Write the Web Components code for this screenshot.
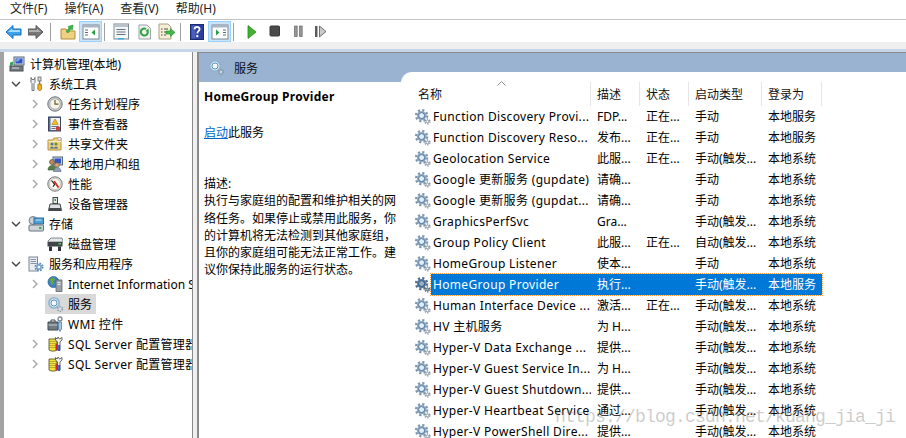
<!DOCTYPE html>
<html lang="zh">
<head>
<meta charset="utf-8">
<title>计算机管理</title>
<style>
  html, body { margin: 0; height: 438px; overflow: hidden; background: #fff; }
  body { font: 12px "Noto Sans", "Noto Sans CJK SC", sans-serif; color: #000; position: relative; }
  mmc-shell { height: 438px; }
</style>
</head>
<body>
<mmc-shell>
  <mmc-menu slot="menu">
    <span>文件(F)</span><span>操作(A)</span><span>查看(V)</span><span>帮助(H)</span>
  </mmc-menu>
  <mmc-toolbar slot="toolbar"></mmc-toolbar>
  <tree-panel slot="tree">
    <tree-item level="0" icon="computer">计算机管理(本地)</tree-item>
    <tree-item level="1" icon="tools" state="open">系统工具</tree-item>
    <tree-item level="2" icon="clock" state="closed">任务计划程序</tree-item>
    <tree-item level="2" icon="event" state="closed">事件查看器</tree-item>
    <tree-item level="2" icon="share" state="closed">共享文件夹</tree-item>
    <tree-item level="2" icon="users" state="closed">本地用户和组</tree-item>
    <tree-item level="2" icon="perf" state="closed">性能</tree-item>
    <tree-item level="2" icon="device">设备管理器</tree-item>
    <tree-item level="1" icon="storage" state="open">存储</tree-item>
    <tree-item level="2" icon="disk">磁盘管理</tree-item>
    <tree-item level="1" icon="server" state="open">服务和应用程序</tree-item>
    <tree-item level="2" icon="iis" state="closed">Internet Information Services (IIS) 管理器</tree-item>
    <tree-item level="2" icon="lightGear" selected>服务</tree-item>
    <tree-item level="2" icon="wmi" style="--ls:.4px">WMI 控件</tree-item>
    <tree-item level="2" icon="sql" state="closed" style="--ls:.3px">SQL Server 配置管理器</tree-item>
    <tree-item level="2" icon="sql" state="closed" style="--ls:.3px">SQL Server 配置管理器</tree-item>
  </tree-panel>
  <services-panel slot="main">
    <service-info slot="info" name="HomeGroup Provider">
      执行与家庭组的配置和维护相关的网络任务。如果停止或禁用此服务，你的计算机将无法检测到其他家庭组，且你的家庭组可能无法正常工作。建议你保持此服务的运行状态。
    </service-info>
    <service-head slot="list"></service-head>
    <service-row slot="list" desc="FDP..." status="正在..." start="手动" logon="本地服务">Function Discovery Provi...</service-row>
    <service-row slot="list" desc="发布..." status="正在..." start="手动" logon="本地服务">Function Discovery Reso...</service-row>
    <service-row slot="list" desc="此服..." status="正在..." start="手动(触发..." logon="本地系统">Geolocation Service</service-row>
    <service-row slot="list" desc="请确..." start="手动" logon="本地系统">Google 更新服务 (gupdate)</service-row>
    <service-row slot="list" desc="请确..." start="手动" logon="本地系统">Google 更新服务 (gupdat...</service-row>
    <service-row slot="list" desc="Gra..." start="手动(触发..." logon="本地系统">GraphicsPerfSvc</service-row>
    <service-row slot="list" desc="此服..." status="正在..." start="自动(触发..." logon="本地系统">Group Policy Client</service-row>
    <service-row slot="list" desc="使本..." start="手动" logon="本地系统">HomeGroup Listener</service-row>
    <service-row slot="list" desc="执行..." start="手动(触发..." logon="本地服务" selected>HomeGroup Provider</service-row>
    <service-row slot="list" desc="激活..." status="正在..." start="手动(触发..." logon="本地系统">Human Interface Device ...</service-row>
    <service-row slot="list" desc="为 H..." start="手动(触发..." logon="本地系统">HV 主机服务</service-row>
    <service-row slot="list" desc="提供..." start="手动(触发..." logon="本地系统">Hyper-V Data Exchange ...</service-row>
    <service-row slot="list" desc="为 H..." start="手动(触发..." logon="本地系统">Hyper-V Guest Service In...</service-row>
    <service-row slot="list" desc="提供..." start="手动(触发..." logon="本地系统">Hyper-V Guest Shutdown...</service-row>
    <service-row slot="list" desc="通过..." start="手动(触发..." logon="本地系统">Hyper-V Heartbeat Service</service-row>
    <service-row slot="list" desc="提供..." start="手动(触发..." logon="本地系统">Hyper-V PowerShell Dire...</service-row>
  </services-panel>
</mmc-shell>
<water-mark>https://blog.csdn.net/kuang_jia_ji</water-mark>

<script>
const ICONS = {
  gear: `
    <circle cx="6.6" cy="6.6" r="5.4" fill="none" stroke="#7d96ae" stroke-width="2.600" stroke-dasharray="2.100 2.140"/>
    <circle cx="6.6" cy="6.6" r="4.7" fill="#93abc2"/>
    <circle cx="6.6" cy="6.6" r="3" fill="#e3eff8" stroke="#4d769e" stroke-width="1"/>
    <circle cx="12.4" cy="12.4" r="2.4" fill="none" stroke="#8d98a3" stroke-width="1.6" stroke-dasharray="1.2 1.2"/>
    <circle cx="12.4" cy="12.4" r="1.9" fill="#a5afb8"/>
    <circle cx="12.4" cy="12.4" r=".8" fill="#fff"/>`,
  lightGear: `
    <circle cx="7" cy="7" r="5.200" fill="#d6eaf6" stroke="#8fb4cf" stroke-width="1.600"/>
    <circle cx="7" cy="7" r="3" fill="#f6fbff" stroke="#5f93b8" stroke-width="1"/>
    <circle cx="13" cy="13" r="2.400" fill="none" stroke="#8b97a3" stroke-width="1.600" stroke-dasharray="1.200 1.200"/>
    <circle cx="13" cy="13" r=".9" fill="#dfe5ea"/>`,
  computer: `
    <rect x="5" y="1" width="10" height="8" fill="#d5dde6" stroke="#56667a"/>
    <rect x="6.5" y="2.5" width="7" height="5" fill="#2f55c8"/>
    <path d="M8 2.5h4l-3 3H6.5z" fill="#7ea4ea"/>
    <path d="M1 6.5l3-1v3.5l-3 1z" fill="#3aa655"/>
    <rect x="1" y="10" width="13" height="5" fill="#727a80" stroke="#474d52"/>
    <path d="M3 12h7" stroke="#d7dbdf"/>`,
  tools: `
    <path d="M3 1.5v5l1 1v7h2v-7l1-1v-5l-1 2h-2z" fill="#eceff1" stroke="#5f676e" stroke-width=".9"/>
    <rect x="10" y="1" width="3" height="4" fill="#d7dbde" stroke="#666" stroke-width=".8"/>
    <path d="M11 5h1.2v3h-1.2z" fill="#777"/>
    <path d="M10 8h3.2l.5 5-2 2-2-2z" fill="#f2b11d" stroke="#9a6c0a" stroke-width=".8"/>`,
  clock: `
    <circle cx="8" cy="8" r="7.2" fill="#c9cdd0" stroke="#6b7176"/>
    <circle cx="8" cy="8" r="5.2" fill="#f7f4e6" stroke="#9aa0a4" stroke-width=".7"/>
    <path d="M8 4v4.2h3.5" fill="none" stroke="#6a5a2c" stroke-width="1.2"/>`,
  event: `
    <rect x="1.5" y="1" width="12" height="14" fill="#5d6f95" stroke="#3a4560"/>
    <rect x="3.5" y="2" width="9.5" height="12" fill="#eef0f4"/>
    <path d="M8 3l3.2 5.5h-6.4z" fill="#f4c21f" stroke="#a57b08" stroke-width=".6"/>
    <path d="M4.5 10.500h7M4.500 12.500h4" stroke="#66707f"/>
    <circle cx="11" cy="12.500" r="2.200" fill="#cf3a33"/>`,
  share: `
    <path d="M1 4h5l1-2h7v12H1z" fill="#eed27c" stroke="#b5923a"/>
    <path d="M1.500 5.500h13" stroke="#f9edc0"/>
    <circle cx="5" cy="8" r="1.600" fill="#4f7fb0"/><circle cx="9" cy="8" r="1.600" fill="#6a8a4d"/>
    <path d="M3 12.500c0-2.500 4-2.500 4 0zM7 12.500c0-2.500 4-2.500 4 0z" fill="#466e96"/>
    <path d="M11 1.500h3v3h-3z" fill="#e8e8e8" stroke="#999" stroke-width=".6"/>`,
  users: `
    <rect x="6" y="1" width="9.500" height="8" fill="#c6d2df" stroke="#56667a"/>
    <rect x="7.500" y="2.500" width="6.500" height="5" fill="#2f55c8"/>
    <circle cx="5" cy="6" r="2.500" fill="#b98a5e" stroke="#5e4227" stroke-width=".6"/>
    <path d="M1 14c0-6 8-6 8 0z" fill="#5a7f45" stroke="#35522a" stroke-width=".6"/>
    <circle cx="10" cy="9" r="2.300" fill="#d7a57d" stroke="#6a4d33" stroke-width=".6"/>
    <path d="M6.500 15.500c0-5.500 7.500-5.500 7.500 0z" fill="#8ea0b6" stroke="#4f6075" stroke-width=".6"/>`,
  perf: `
    <circle cx="8" cy="8" r="7.200" fill="#e9e6d8" stroke="#70757a"/>
    <circle cx="8" cy="8" r="5.500" fill="#fbfaf3" stroke="#a6a8a3" stroke-width=".6"/>
    <path d="M4.500 4.500l3.200 3.800L6 10.800" fill="none" stroke="#1d1d1d" stroke-width="1.100"/>
    <path d="M7 5l4.500 6.500" stroke="#d22c25" stroke-width="1.800"/>`,
  device: `
    <rect x="6" y="1.500" width="4.500" height="6" fill="#e4e8e4" stroke="#3f4448"/>
    <rect x="7.500" y="3" width="1.500" height="2" fill="#2da83f"/>
    <path d="M3 8h10l1.500 6.500h-13z" fill="#dfe2e4" stroke="#3f4448"/>
    <rect x="2" y="12" width="12" height="2.500" fill="#44494d"/>`,
  storage: `
    <circle cx="5" cy="4.500" r="4" fill="#c9d0d6" stroke="#72808c"/>
    <rect x="6" y="2" width="9.500" height="6" fill="#4f9fd4" stroke="#2c6f9f"/>
    <path d="M7.500 4h6" stroke="#bfe2f7"/>
    <rect x="1" y="9" width="14.500" height="6" rx="1" fill="#cdd4d9" stroke="#69747d"/>
    <rect x="11" y="11" width="2.500" height="2" fill="#3fae46"/>`,
  disk: `
    <path d="M4 2h11l1 3v1H1V5z" fill="#e4e6e8" stroke="#6a6f73" stroke-width=".8"/>
    <rect x=".5" y="6" width="15" height="4.500" fill="#3f4448"/>
    <rect x="11.500" y="7" width="2.500" height="1.500" fill="#56c85a"/>
    <path d="M2 10.500h3v4.500H2zM11 10.500h3v4.500h-3z" fill="#2e3236"/>`,
  server: `
    <rect x="1" y="1" width="8.500" height="14" fill="#e9edf1" stroke="#7b8793"/>
    <path d="M2.500 3.500h5.500M2.500 5.500h5.500M2.500 7.500h5.500" stroke="#8695a4"/>
    <circle cx="11" cy="11" r="3.500" fill="none" stroke="#4f86b8" stroke-width="2" stroke-dasharray="1.500 1.250"/>
    <circle cx="11" cy="11" r="3" fill="#7aa5cc"/>
    <circle cx="11" cy="11" r="1.300" fill="#fff"/>`,
  iis: `
    <circle cx="6.500" cy="6" r="5.500" fill="#3f83c2" stroke="#235a8f" stroke-width=".7"/>
    <path d="M3 3l3-1.500 2 2-2 2 1 2-2.500 1.500zM8 7l2.500-1 .5 2.500-2 1.500z" fill="#6cab2f"/>
    <rect x="9" y="4" width="6" height="11.500" fill="#9aa2a8" stroke="#545b60" stroke-width=".7"/>
    <path d="M10.500 6.500h3M10.500 8.500h3" stroke="#e8eaec"/>`,
  wmi: `
    <path d="M1 6h10v8H1z" fill="#6f7a82" stroke="#41484d"/>
    <path d="M4 6V4h4v2" fill="none" stroke="#41484d"/>
    <path d="M1.500 9h9" stroke="#c7ced3"/>
    <path d="M11.500 6h3v7l-1.500 2.500-1.500-2.500z" fill="#a8c7e4" stroke="#4c7fae" stroke-width=".8"/>
    <circle cx="13" cy="3" r="2" fill="none" stroke="#7d868d" stroke-width="1.300"/>`,
  sql: `
    <path d="M2 3h8v11c-2 1.500-6 1.500-8 0z" fill="#f2e23a" stroke="#4c4a1c" stroke-width=".8"/>
    <path d="M3 5v8M5 5v8M7 5v8M9 5v8" stroke="#66601a" stroke-width=".8" stroke-dasharray="1 1"/>
    <path d="M11 1l1.500 2L15 1.500v2.500l-2 2v8h-2.500V6l-2-2V1.500L10 3z" fill="#eef0f2" stroke="#333" stroke-width=".7"/>
    <rect x="8.500" y="8" width="2.200" height="6.500" fill="#d3262e"/>
    <rect x="11.200" y="9" width="2" height="6" fill="#2453c4"/>`,
  back: `
    <path d="M8 1.500L1 8l7 6.500V11h8V5H8z" fill="#3da3ea" stroke="#1471ba"/>
    <path d="M7 4.500L3 8h12V6H7z" fill="#a5dcfb"/>`,
  forward: `
    <path d="M8 1.500L15 8l-7 6.500V11H0V5h8z" fill="#777" stroke="#5b5b5b"/>
    <path d="M9 4.500L13 8H1V6h8z" fill="#b0b0b0"/>`,
  up: `
    <path d="M1 5h5l1.500 2H15v8H1z" fill="#f0d181" stroke="#b28d3e"/>
    <path d="M6 7.500L9 4 8 2.500l5-1.500-.5 5-1.500-1L8 9z" fill="#3eb54a" stroke="#1f8a2b" stroke-width=".5"/>`,
  toggleLeft: `
    <rect x="1" y="2" width="16" height="14" fill="#fff" stroke="#7c8895"/>
    <rect x="1" y="2" width="16" height="2.500" fill="#a9b5c1"/>
    <path d="M3 7h3M3 9.500h3M3 12h3" stroke="#5d6d7d" stroke-width="1.200"/>
    <path d="M13 6.500v6l-3.500-3z" fill="#26a046"/>`,
  toggleRight: `
    <rect x="1" y="2" width="16" height="14" fill="#fff" stroke="#7c8895"/>
    <rect x="1" y="2" width="16" height="2.500" fill="#a9b5c1"/>
    <path d="M12 7h3M12 9.500h3M12 12h3" stroke="#5d6d7d" stroke-width="1.200"/>
    <path d="M5 6.500v6l3.500-3z" fill="#26a046"/>`,
  props: `
    <rect x="1" y="1" width="14.500" height="15" fill="#f4f6f8" stroke="#7d8790"/>
    <rect x="1.500" y="1.500" width="13.500" height="2.500" fill="#b9c2ca"/>
    <path d="M3.500 6.500h9M3.500 9h9M3.500 11.500h9" stroke="#65707b"/>
    <rect x="5" y="15" width="6" height="1.500" fill="#35aee2"/>`,
  refresh: `
    <path d="M2 1h8l3.500 3.500V15H2z" fill="#f2f3f3" stroke="#9aa1a6"/>
    <path d="M10.800 8A3.500 3.500 0 1 1 9 5" fill="none" stroke="#2ea33c" stroke-width="2"/>
    <path d="M11.500 4.500l.3 4-3.500-1.500z" fill="#2ea33c"/>`,
  exportList: `
    <path d="M1 1h9l3 3v12H1z" fill="#f6efd8" stroke="#aaa083"/>
    <path d="M3 6h1.500M6 6h4M3 9h1.500M6 9h2M3 12h1.500M6 12h2" stroke="#4e4e42"/>
    <path d="M8 8h4.500V5.500L17 9.500 12.500 13.500V11H8z" fill="#46b74b" stroke="#1f8c2d" stroke-width=".6"/>`,
  help: `
    <rect x=".5" y=".5" width="13" height="15" fill="#2c3f9f" stroke="#1c2a70"/>
    <rect x="1.500" y="1.500" width="4" height="13" fill="#4a60c0"/>
    <path d="M4.600 5.200c0-3.200 5-3.200 5 0 0 2-2.300 2-2.300 4.300" fill="none" stroke="#fff" stroke-width="1.800"/>
    <rect x="6.300" y="11" width="2" height="2.200" fill="#fff"/>`,
  play: `<path d="M1 1.500l8 6.500-8 6.500z" fill="#3fb22e" stroke="#2a8a1f" stroke-width=".8"/>`,
  stop: `<rect x="1" y="1" width="9.500" height="10" rx="1" fill="#4a4a4a" stroke="#383838"/>`,
  pause: `<path d="M1.500 1h2.700v10.500H1.500zM6.500 1h2.700v10.500H6.500z" fill="#9a9a9a" stroke="#6d6d6d" stroke-width=".8"/>`,
  resume: `
    <path d="M1 1h2.500v11H1z" fill="#5c5c5c"/>
    <path d="M5.500 1l6.500 5.500-6.500 5.500z" fill="#c9c9c9" stroke="#6f6f6f"/>`,
};

const icon = (name, w = 16, h = 16) =>
  `<svg width="${w}" height="${h}" viewBox="0 0 ${w} ${h}" aria-hidden="true">${ICONS[name]}</svg>`;

class MmcShell extends HTMLElement {
  constructor() {
    super();
    this.attachShadow({ mode: "open" });
  }

  connectedCallback() {
    this.shadowRoot.innerHTML = /* html */`
    <style>
      :host { display: flex; flex-direction: column; overflow: hidden; }
      .strip { height: 7px; background: #f0f0f0; flex: none; }
      .edge { height: 3px; background: #c6d6e8; flex: none; }
      .body { flex: 1; min-height: 0; display: flex; background: #f0f0f0; }
      .gutter { width: 4px; flex: none; background: #a3a3a3; }
      .tree { width: 189px; flex: none; background: #fff; border-right: 1px solid #8a8a8a; box-sizing: border-box; overflow: hidden; }
      .main { flex: 1; min-width: 0; margin-left: 4px; border-left: 2px solid #8a8a8a; border-top: 1px solid #8a8a8a; box-sizing: border-box; }
    </style>
    <slot name="menu"></slot>
    <slot name="toolbar"></slot>
    <div class="strip"></div>
    <div class="edge"></div>
    <div class="body">
      <div class="gutter"></div>
      <div class="tree"><slot name="tree"></slot></div>
      <div class="main"><slot name="main"></slot></div>
    </div>`;
  }
}

class MmcMenu extends HTMLElement {
  constructor() {
    super();
    this.attachShadow({ mode: "open" });
  }

  connectedCallback() {
    this.shadowRoot.innerHTML = /* html */`
    <style>
      :host { display: block; height: 19px; border-bottom: 1px solid #c4c4c4; background: #fff; color: #222; }
      .bar { display: flex; gap: 17px; padding-left: 10px; line-height: 18px; }
      ::slotted(span) { display: block; }
    </style>
    <div class="bar"><slot></slot></div>`;
  }
}

class MmcToolbar extends HTMLElement {
  constructor() {
    super();
    this.attachShadow({ mode: "open" });
  }

  connectedCallback() {
    const btn = (name, w, h, cls = "") =>
      `<span class="btn ${cls}">${icon(name, w, h)}</span>`;
    this.shadowRoot.innerHTML = /* html */`
    <style>
      :host { display: block; height: 21px; padding-top: 1px; background: #fff; }
      .bar { display: flex; align-items: center; height: 21px; padding-left: 2px; }
      .btn { width: 23px; height: 21px; flex: none; display: flex; align-items: center; justify-content: center; box-sizing: border-box; }
      .on { background: #cce4f7; border: 1px solid #99d1ff; }
      .sep { width: 1px; height: 18px; background: #a0a0a0; flex: none; }
      svg { display: block; }
    </style>
    <div class="bar">
      ${btn("back", 17, 16)}${btn("forward", 17, 16)}
      <span class="sep" style="margin:0 5px 0 2px"></span>
      ${btn("up", 16, 16)}${btn("toggleLeft", 18, 17, "on")}
      <span class="sep" style="margin:0 4px 0 2px"></span>
      ${btn("props", 16, 17)}${btn("refresh", 14, 16)}${btn("exportList", 17, 17)}
      <span class="sep" style="margin:0 4px 0 2px"></span>
      ${btn("help", 14, 16)}${btn("toggleRight", 18, 17, "on")}
      <span class="sep" style="margin:0 6px 0 2px"></span>
      ${btn("play", 10, 16)}${btn("stop", 12, 13)}${btn("pause", 10, 13)}${btn("resume", 13, 13)}
    </div>`;
  }
}

class TreePanel extends HTMLElement {
  constructor() {
    super();
    this.attachShadow({ mode: "open" });
  }

  connectedCallback() {
    this.shadowRoot.innerHTML = /* html */`
    <style>
      :host { display: block; padding-top: 2px; }
    </style>
    <slot></slot>`;
  }
}

class TreeItem extends HTMLElement {
  constructor() {
    super();
    this.attachShadow({ mode: "open" });
  }

  static get chevrons() {
    return {
      open: `<svg width="12" height="12" viewBox="0 0 12 12"><path d="M2 4l4 4 4-4" fill="none" stroke="#404040" stroke-width="1.400"/></svg>`,
      closed: `<svg width="12" height="12" viewBox="0 0 12 12"><path d="M4 2l4 4-4 4" fill="none" stroke="#a6a6a6" stroke-width="1.400"/></svg>`,
    };
  }

  connectedCallback() {
    const level = Number(this.getAttribute("level"));
    const state = this.getAttribute("state");
    const indent = [3, 6, 25][level];
    const chevron = level === 0 ? "" : `<span class="chev">${state ? TreeItem.chevrons[state] : ""}</span>`;
    this.shadowRoot.innerHTML = /* html */`
    <style>
      :host { display: flex; align-items: center; height: 20px; white-space: nowrap; padding-left: ${indent}px; color: #000; }
      .chev { width: 12px; height: 12px; margin-right: 4px; flex: none; }
      .item { display: flex; align-items: center; height: 20px; padding: 0 4px 0 2px; }
      :host([selected]) .item { background: #d9d9d9; }
      svg { display: block; flex: none; }
      .label { margin-left: 5px; letter-spacing: var(--ls, 0); }
    </style>
    ${chevron}
    <span class="item">${icon(this.getAttribute("icon"))}<span class="label"><slot></slot></span></span>`;
  }
}

class ServicesPanel extends HTMLElement {
  constructor() {
    super();
    this.attachShadow({ mode: "open" });
  }

  connectedCallback() {
    this.shadowRoot.innerHTML = /* html */`
    <style>
      :host { display: block; background: #fff; height: 100%; overflow: hidden; }
      .band { height: 29px; background: #9ab3d1; display: flex; align-items: center; gap: 9px; padding-left: 9px; color: #111; }
      svg { display: block; }
      .cols { display: grid; grid-template-columns: 202px 1fr; }
      .list { margin-top: -10px; background: #fff; border-radius: 11px 0 0 0; padding-left: 11px; position: relative; padding-top: 10px; }
    </style>
    <div class="band">${icon("lightGear", 17, 17)}<span>服务</span></div>
    <div class="cols">
      <div><slot name="info"></slot></div>
      <div class="list"><slot name="list"></slot></div>
    </div>`;
  }
}

class ServiceInfo extends HTMLElement {
  constructor() {
    super();
    this.attachShadow({ mode: "open" });
  }

  connectedCallback() {
    this.shadowRoot.innerHTML = /* html */`
    <style>
      :host { display: block; padding: 6px 0 0 5px; color: #000; }
      h2 { margin: 0; font-size: 12px; font-weight: 700; line-height: 18px; letter-spacing: .27px; color: #000; }
      p { margin: 0; }
      .action { margin-top: 18px; line-height: 18px; }
      a { color: #0066cc; text-decoration: underline; }
      .desc { margin-top: 33px; width: 193px; line-height: 17.300px; }
    </style>
    <h2>${this.getAttribute("name")}</h2>
    <p class="action"><a href="#">启动</a>此服务</p>
    <div class="desc">描述:<br><slot></slot></div>`;
  }
}

class ServiceHead extends HTMLElement {
  constructor() {
    super();
    this.attachShadow({ mode: "open" });
  }

  connectedCallback() {
    this.shadowRoot.innerHTML = /* html */`
    <style>
      :host { display: grid; grid-template-columns: 179px 49px 49px 73px 60px; height: 24px; color: #111; width: max-content; }
      div { border-right: 1px solid #e5e5e5; padding: 4px 0 0 6px; line-height: 18px; box-sizing: border-box; position: relative; }
      div:first-child { padding-left: 5px; }
      svg { position: absolute; left: 85px; top: -1px; }
    </style>
    <div>名称<svg width="9" height="5" viewBox="0 0 9 5"><path d="M.5 4.500l4-4 4 4" fill="none" stroke="#8a8a8a"/></svg></div>
    <div>描述</div><div>状态</div><div>启动类型</div><div>登录为</div>`;
  }
}

class ServiceRow extends HTMLElement {
  constructor() {
    super();
    this.attachShadow({ mode: "open" });
  }

  connectedCallback() {
    const get = (name) => this.getAttribute(name) || "";
    this.shadowRoot.innerHTML = /* html */`
    <style>
      :host { display: grid; grid-template-columns: 19px auto; height: 21px; width: max-content; color: #000; white-space: nowrap; }
      .ico { display: flex; align-items: center; padding-left: 3px; }
      svg { display: block; }
      :host([selected]) svg { filter: brightness(.72) saturate(1.800); }
      .cells { display: grid; grid-template-columns: 160px 49px 49px 73px 60px; align-items: center; line-height: 21px; box-sizing: border-box; }
      .cells span { padding-left: 6px; overflow: hidden; }
      .cells span:first-child { padding-left: 2px; letter-spacing: .33px; }
      :host([selected]) .cells { background: #0078d7; color: #fff; outline: 1px dotted #ff9a3c; outline-offset: 0; }
    </style>
    <div class="ico">${icon("gear")}</div>
    <div class="cells">
      <span><slot></slot></span>
      <span>${get("desc")}</span><span>${get("status")}</span><span>${get("start")}</span><span>${get("logon")}</span>
    </div>`;
  }
}

class WaterMark extends HTMLElement {
  constructor() {
    super();
    this.attachShadow({ mode: "open" });
  }

  connectedCallback() {
    this.shadowRoot.innerHTML = /* html */`
    <style>
      :host { position: absolute; left: 555px; top: 402px; white-space: nowrap; font: 18px/30px "Liberation Mono", monospace; letter-spacing: -.8px; color: rgba(120,120,120,.38); pointer-events: none; }
    </style>
    <slot></slot>`;
  }
}

customElements.define("mmc-shell", MmcShell);
customElements.define("mmc-menu", MmcMenu);
customElements.define("mmc-toolbar", MmcToolbar);
customElements.define("tree-panel", TreePanel);
customElements.define("tree-item", TreeItem);
customElements.define("services-panel", ServicesPanel);
customElements.define("service-info", ServiceInfo);
customElements.define("service-head", ServiceHead);
customElements.define("service-row", ServiceRow);
customElements.define("water-mark", WaterMark);
</script>
</body>
</html>
